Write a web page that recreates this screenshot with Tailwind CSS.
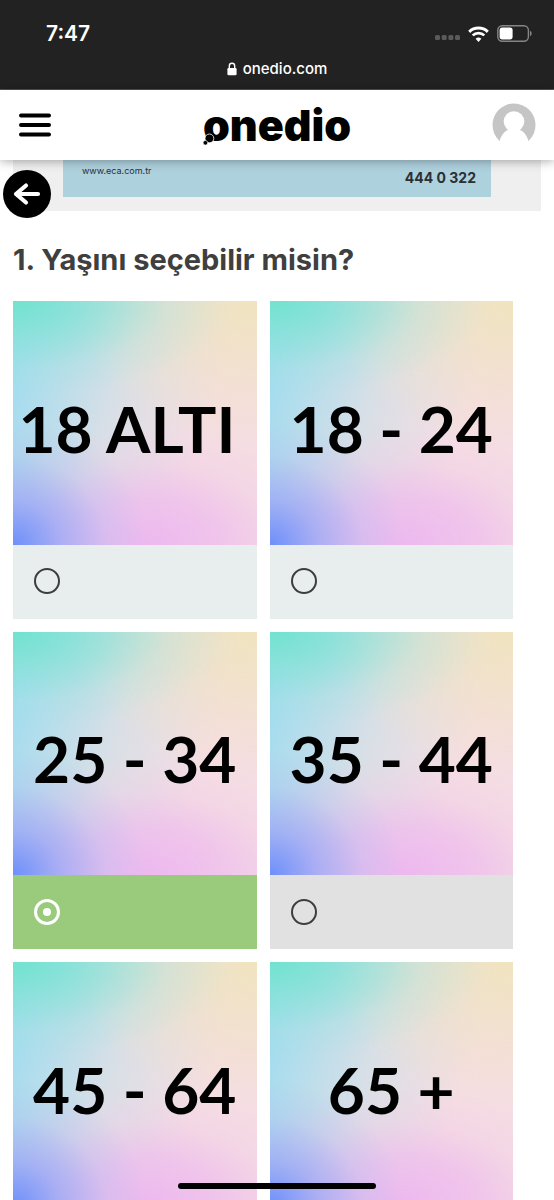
<!DOCTYPE html>
<html lang="tr">

<head>
    <meta charset="UTF-8" />
    <meta name="viewport" content="width=device-width, initial-scale=1.0" />
    <title>Onedio - Test</title>
    <script src="https://cdn.jsdelivr.net/npm/@tailwindcss/browser@4"></script>
</head>

<body class="relative flex h-screen flex-col overflow-hidden bg-white font-['Inter',sans-serif] text-[#3f3f3f]">

    <!-- Status bar -->
    <div class="shrink-0 border-b border-[#555] bg-[#222] text-white">
        <div class="flex h-14 items-end justify-between pr-[22px] pl-[46px]">
            <span class="pb-2 text-[21px] leading-7 font-semibold">7:47</span>
            <div class="flex items-center gap-2 pb-3.5">
                <svg class="mt-2 h-[5px] w-[25px] fill-[#5a5a5a]" viewBox="0 0 25 5">
                    <rect width="5" height="5" rx="1.5" />
                    <rect x="6.7" width="5" height="5" rx="1.5" />
                    <rect x="13.4" width="5" height="5" rx="1.5" />
                    <rect x="20" width="5" height="5" rx="1.5" />
                </svg>
                <svg class="h-4 w-[21px]" viewBox="0 0 21 16" fill="none" stroke="#fff">
                    <path d="M1.2 5.8a13.4 13.4 0 0 1 18.6 0" stroke-width="3" />
                    <path d="M4.7 9.4a8.3 8.3 0 0 1 11.6 0" stroke-width="2.7" />
                    <path d="M10.5 16 7.6 12.8a4.3 4.3 0 0 1 5.8 0z" fill="#fff" stroke="none" />
                </svg>
                <svg class="h-[17px] w-[35px]" viewBox="0 0 35 17">
                    <rect x=".8" y=".8" width="30.6" height="15.4" rx="4.5" fill="none" stroke="#858585" stroke-width="1.4" />
                    <rect x="2.6" y="2.6" width="13" height="11.8" rx="2.6" fill="#fff" />
                    <path d="M33 5.8v5.4c2.2-.9 2.2-4.5 0-5.4z" fill="#858585" />
                </svg>
            </div>
        </div>
        <div class="flex h-[33px] items-start justify-center gap-1.5">
            <svg class="mt-1.5 h-3.5 w-2.5" viewBox="0 0 10 14">
                <path d="M2.3 7V4a2.7 2.7 0 0 1 5.4 0v3" fill="none" stroke="#fff" stroke-width="1.4" />
                <rect x=".4" y="6" width="9.2" height="7.2" rx="1.3" fill="#fff" />
            </svg>
            <span class="text-[15px] leading-[26px] font-medium">onedio.com</span>
        </div>
    </div>

    <!-- Navbar -->
    <header class="z-10 flex h-[70px] shrink-0 items-center justify-between bg-white px-[18px] shadow-[0_1px_10px_rgba(0,0,0,0.35)]">
        <button aria-label="Menü" class="w-11">
            <svg class="h-6 w-[34px]" viewBox="0 0 34 24" stroke="#000" stroke-width="4" stroke-linecap="round">
                <path d="M3 2.5h28M3 12h28M3 21.5h28" />
            </svg>
        </button>
        <a href="#" class="relative text-[43px] leading-none font-black text-black">
            onedio
            <svg class="absolute bottom-0 left-0 h-3.5 w-3.5" viewBox="0 0 14 14">
                <circle cx="6.4" cy="5.4" r="4.4" fill="#000" stroke="#fff" stroke-width=".8" />
                <circle cx="2.4" cy="9.8" r="2.3" fill="#000" stroke="#fff" stroke-width=".6" />
            </svg>
        </a>
        <button aria-label="Profil" class="w-11">
            <svg class="h-11 w-11" viewBox="0 0 44 44">
                <circle cx="22" cy="22" r="21.5" fill="#c5c5c5" />
                <circle cx="22" cy="18.5" r="10.3" fill="#fff" />
                <path d="M17 26.500h10c4.500 1.500 7.500 5.500 9.200 10.800L37 44H7l.8-6.700c1.700-5.300 4.700-9.300 9.200-10.800z" fill="#fff" />
            </svg>
        </button>
    </header>

    <main class="relative min-h-0 flex-1 overflow-hidden">
        <!-- Banner -->
        <div class="mx-[13px] bg-[#efefef] px-[50px] pb-3.5">
            <div class="flex h-[37px] items-start justify-between bg-[#aed1de] pr-[15px] pl-[19px] text-[#2b2f33]">
                <span class="pt-1 text-[9px] leading-[14px]">www.eca.com.tr</span>
                <span class="pt-2 text-[14px] leading-5 font-bold">444 0 322</span>
            </div>
        </div>
        <button aria-label="Geri" class="absolute top-2.5 left-[3px] h-12 w-12 rounded-full bg-black">
            <svg class="h-12 w-12" viewBox="0 0 48 48" fill="none" stroke="#fff" stroke-width="4.2" stroke-linecap="round" stroke-linejoin="round">
                <path d="M35 24H13M23 15.5 13 24l10 8.500" />
            </svg>
        </button>

        <section class="pt-[31px] pr-[41px] pl-[13px]">
            <h1 class="text-[29px] leading-9 font-bold">1. Yaşını seçebilir misin?</h1>
            <div id="options" class="mt-[23px] grid grid-cols-2 gap-[13px]"></div>
        </section>
    </main>

    <div class="absolute bottom-[11px] left-1/2 h-1.5 w-[198px] -translate-x-1/2 rounded-full bg-black"></div>

    <script>
        const options = ["18 ALTI&nbsp;", "18 - 24", "25 - 34", "35 - 44", "45 - 64", "65 +"];
        const footerColors = ["bg-[#e8eded]", "bg-[#e8eded]", "bg-[#9aca7b]", "bg-[#e1e1e1]", "bg-[#e8eded]", "bg-[#e8eded]"];
        const selected = 2;

        document.getElementById("options").innerHTML = options.map((text, i) => `
            <label class="block cursor-pointer">
                <span class="flex aspect-square items-center justify-center bg-[#f5dde3] bg-[radial-gradient(55%_52%_at_0%_100%,#6f8ffa_0%,#8f9ff8aa_35%,#a9b4f344_70%,#b0b8f300_100%)_,radial-gradient(90%_40%_at_0%_0%,#72e3cf_0%,#82e3d3aa_35%,#a0e3da44_70%,#b0e3de00_100%),radial-gradient(75%_60%_at_100%_0%,#f0e4bf_0%,#f0e4bf00_100%),radial-gradient(75%_48%_at_55%_100%,#edb8ef_0%,#edb8efaa_40%,#f0c4ea44_72%,#f2ccea00_100%),linear-gradient(108deg,#9cdcf0_4%,#d9dfe6_42%,#f5dde3_72%)] pt-3 font-['Lato',sans-serif] text-[64px] leading-none font-bold whitespace-nowrap text-black">${text}</span>
                <span class="flex h-[74px] items-center pb-px pl-[21px] ${footerColors[i]}">
                    <input type="radio" name="age" ${i === selected ? "checked" : ""} class="grid h-[26px] w-[26px] appearance-none place-items-center rounded-full border-2 border-[#3d3d3d] checked:border-3 checked:border-white checked:before:h-2 checked:before:w-2 checked:before:rounded-full checked:before:bg-white checked:before:content-['']" />
                </span>
            </label>
        `).join("");
    </script>

</body>
</html>
